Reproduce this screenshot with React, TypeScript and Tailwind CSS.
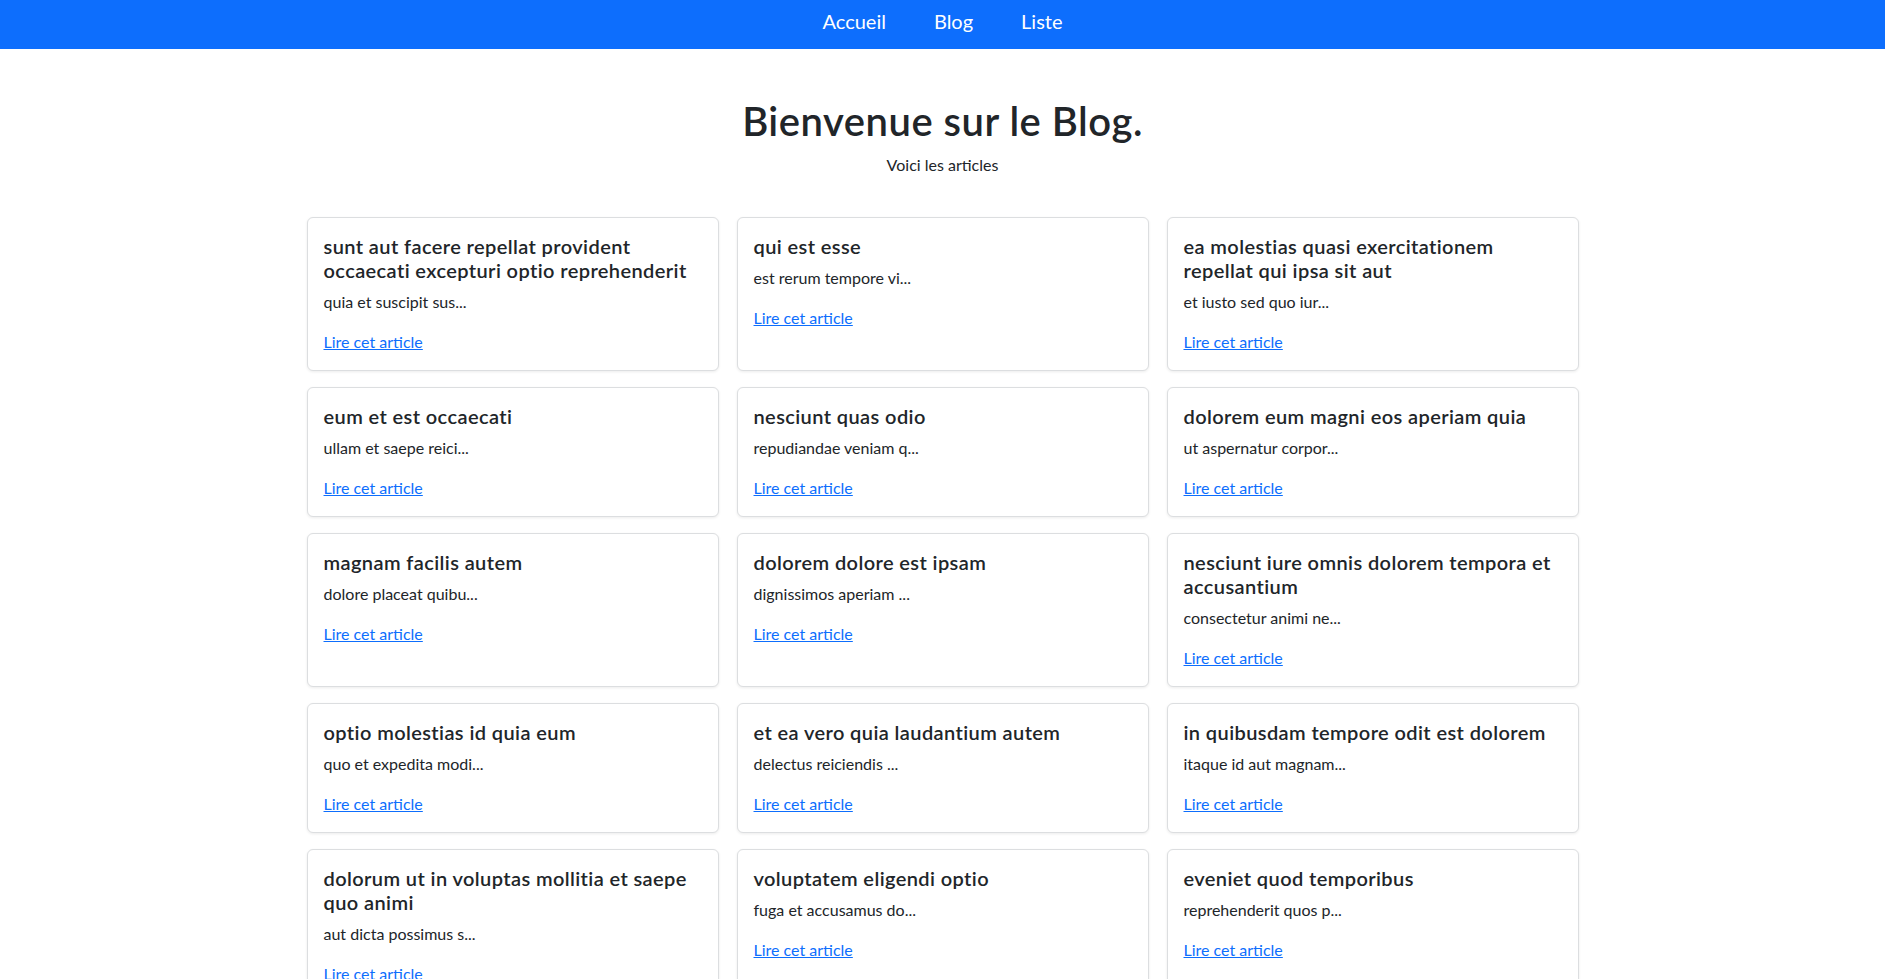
import React from "react";

type Post = {
  id: number;
  title: string;
  excerpt: string;
};

const posts: Post[] = [
  { id: 1, title: "sunt aut facere repellat provident occaecati excepturi optio reprehenderit", excerpt: "quia et suscipit sus..." },
  { id: 2, title: "qui est esse", excerpt: "est rerum tempore vi..." },
  { id: 3, title: "ea molestias quasi exercitationem repellat qui ipsa sit aut", excerpt: "et iusto sed quo iur..." },
  { id: 4, title: "eum et est occaecati", excerpt: "ullam et saepe reici..." },
  { id: 5, title: "nesciunt quas odio", excerpt: "repudiandae veniam q..." },
  { id: 6, title: "dolorem eum magni eos aperiam quia", excerpt: "ut aspernatur corpor..." },
  { id: 7, title: "magnam facilis autem", excerpt: "dolore placeat quibu..." },
  { id: 8, title: "dolorem dolore est ipsam", excerpt: "dignissimos aperiam ..." },
  { id: 9, title: "nesciunt iure omnis dolorem tempora et accusantium", excerpt: "consectetur animi ne..." },
  { id: 10, title: "optio molestias id quia eum", excerpt: "quo et expedita modi..." },
  { id: 11, title: "et ea vero quia laudantium autem", excerpt: "delectus reiciendis ..." },
  { id: 12, title: "in quibusdam tempore odit est dolorem", excerpt: "itaque id aut magnam..." },
  { id: 13, title: "dolorum ut in voluptas mollitia et saepe quo animi", excerpt: "aut dicta possimus s..." },
  { id: 14, title: "voluptatem eligendi optio", excerpt: "fuga et accusamus do..." },
  { id: 15, title: "eveniet quod temporibus", excerpt: "reprehenderit quos p..." },
];

const links = ["Accueil", "Blog", "Liste"];

// navbar
const Navbar: React.FC = () => {
  return (
    <nav className="bg-[#0d6efd] h-[49px] pb-[7px] flex items-center justify-center">
      {links.map((l) => (
        <a key={l} href="#" className="px-6 text-[20px] leading-[30px] text-white">
          {l}
        </a>
      ))}
    </nav>
  );
};

const PostCard: React.FC<{ post: Post }> = ({ post }) => {
  return (
    <div className="bg-white border border-[#dcdee0] rounded-[6px] shadow-[0_1px_3px_rgba(0,0,0,0.08)] p-4">
      <h5 className="text-[20px] leading-[24px] font-semibold tracking-[0.02em] text-[#212529] mb-2">
        {post.title}
      </h5>
      <p className="text-[16px] leading-[24px] text-[#212529] mb-4">{post.excerpt}</p>
      <a href="#" className="text-[16px] leading-[24px] text-[#0d6efd] underline">
        Lire cet article
      </a>
    </div>
  );
};

export default function App() {
  return (
    <div className="min-h-screen bg-white text-[#212529] font-['Lato',sans-serif]">
      <Navbar />

      <div className="text-center pt-[48px]">
        <h1 className="text-[40px] leading-[48px] font-semibold tracking-[0.0125em] mb-2">
          Bienvenue sur le Blog.
        </h1>
        <p className="text-[16px] leading-[24px]">Voici les articles</p>
      </div>

      {/*articles */}
      <div className="w-[1272px] mx-auto mt-[40px] grid grid-cols-3 gap-x-[18px] gap-y-[16px] pb-10">
        {posts.map((post) => (
          <PostCard key={post.id} post={post} />
        ))}
      </div>
    </div>
  );
}
